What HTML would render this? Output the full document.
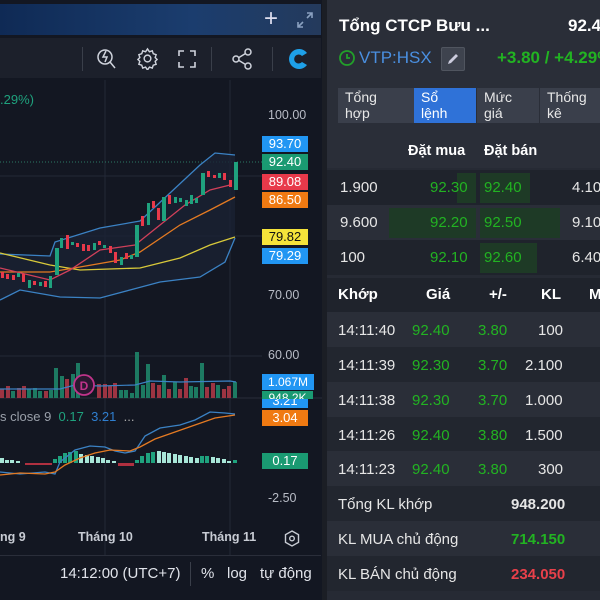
<!DOCTYPE html>
<html><head><meta charset="utf-8">
<style>
*{margin:0;padding:0;box-sizing:border-box}
body{width:600px;height:600px;overflow:hidden;background:#1b1e25;font-family:"Liberation Sans","Noto Sans CJK SC",sans-serif;position:relative;color:#e6e6e6}
.abs{position:absolute;white-space:nowrap}
.lbl{position:absolute;left:262px;width:46px;height:16px;color:#fff;font-size:13px;text-align:center;line-height:16px}
.ax{position:absolute;left:268px;color:#b8bcc6;font-size:12.5px}
#rp{position:absolute;left:327px;top:0;width:273px;height:600px;background:#262a34}
.row{position:absolute;left:0;width:273px;height:35px;font-size:15px}
.row span{position:absolute;top:9px}
.g{color:#22b322}
.tab{position:absolute;top:88px;height:35px;background:#3a3f4b;color:#e8e8e8;font-size:14px;line-height:16px;padding:1px 0 0 7px}
</style></head><body>
<div class="abs" style="left:0;top:0;width:322px;height:600px;background:#131722"></div>
<div class="abs" style="left:0;top:4px;width:321px;height:31px;background:linear-gradient(90deg,#0f2a55,#1b3d6e 60%,#243a5c)"></div>
<div class="abs" style="left:264px;top:5px;color:#dde;font-size:24px;font-weight:300">+</div>
<svg class="abs" style="left:296px;top:11px" width="18" height="18" viewBox="0 0 18 18" fill="none" stroke="#8aa0c0" stroke-width="1.6"><path d="M11 2h5v5M16 2l-5 5M2 11v5h5M2 16l5-5"/></svg>
<div class="abs" style="left:0;top:38px;width:321px;height:40px;background:#1c202b"></div>
<div class="abs" style="left:82px;top:47px;width:1px;height:24px;background:#3a3f4a"></div>
<svg class="abs" style="left:96px;top:46px" width="22" height="24" viewBox="0 0 22 24" fill="none" stroke="#cfd3dc" stroke-width="1.5"><circle cx="9" cy="11" r="7"/><path d="M14 16l5 6M10 5l-3 6h4l-2 5"/></svg>
<svg class="abs" style="left:136px;top:47px" width="23" height="23" viewBox="0 0 24 24" fill="none" stroke="#cfd3dc" stroke-width="1.5"><circle cx="12" cy="12" r="3.5"/><path d="M12 2l2 3 3-1 1 3 3 1-1 3 2 2-2 2 1 3-3 1-1 3-3-1-2 3-2-3-3 1-1-3-3-1 1-3-2-2 2-2-1-3 3-1 1-3 3 1z"/></svg>
<svg class="abs" style="left:177px;top:49px" width="20" height="20" viewBox="0 0 20 20" fill="none" stroke="#cfd3dc" stroke-width="1.6"><path d="M2 7V2h5M13 2h5v5M18 13v5h-5M7 18H2v-5"/></svg>
<div class="abs" style="left:211px;top:47px;width:1px;height:24px;background:#3a3f4a"></div>
<svg class="abs" style="left:231px;top:48px" width="22" height="22" viewBox="0 0 22 22" fill="none" stroke="#cfd3dc" stroke-width="1.5"><circle cx="17" cy="4" r="3"/><circle cx="5" cy="11" r="3"/><circle cx="17" cy="18" r="3"/><path d="M8 9.5l6.5-4M8 12.5l6.5 4"/></svg>
<div class="abs" style="left:272px;top:47px;width:1px;height:24px;background:#3a3f4a"></div>
<svg class="abs" style="left:287px;top:47px" width="24" height="24" viewBox="0 0 24 24"><path d="M20 6A10 10 0 1 0 20 18L15 15A4.5 4.5 0 1 1 15 9Z" fill="#1ea0e8"/></svg>

<svg class="abs" style="left:0;top:80px" width="322" height="475" viewBox="0 80 322 475">
<g stroke="#232837" stroke-width="1"><line x1="105" y1="80" x2="105" y2="555"/><line x1="230" y1="80" x2="230" y2="555"/><line x1="0" y1="176" x2="262" y2="176"/><line x1="0" y1="236" x2="262" y2="236"/><line x1="0" y1="356" x2="262" y2="356"/><line x1="0" y1="398" x2="322" y2="398" stroke="#2a2e3a"/></g>
<line x1="0" y1="162" x2="262" y2="162" stroke="#2b7a64" stroke-dasharray="1,2"/>
<path d="M0,254 L50,256 L55,242 L100,228 L140,221 L170,193 L200,165 L215,153 L235,155 L235,238 L225,262 L200,277 L160,282 L130,290 L100,298 L60,297 L20,290 L0,300Z" fill="#1a2233" opacity="0.8"/>
<g fill="none" stroke-width="1.3">
<path d="M0,254 L50,256 L55,242 L100,228 L140,221 L170,193 L200,165 L215,153 L235,155" stroke="#3b82c4"/>
<path d="M0,300 L20,290 L60,297 L100,298 L130,290 L160,282 L200,277 L225,262 L235,238" stroke="#3b82c4"/>
<path d="M0,253 L50,265 L80,270 L140,268 L180,258 L210,245 L235,237" stroke="#d8c93a"/>
<path d="M0,272 L50,272 L80,267 L120,260 L140,252 L180,225 L210,210 L235,197" stroke="#e47a22"/>
<path d="M0,268 L50,280 L70,270 L100,250 L135,245 L160,225 L185,205 L210,190 L230,185" stroke="#d0405a"/>
</g>
<g>
<rect x="1" y="272" width="3" height="6" fill="#e8394a"/><rect x="6" y="274" width="3" height="5" fill="#e8394a"/><rect x="12" y="275" width="3" height="5" fill="#e8394a"/><rect x="17" y="273" width="3" height="4" fill="#1fa27e"/><rect x="22" y="274" width="3" height="8" fill="#e8394a"/><rect x="28" y="280" width="3" height="8" fill="#1fa27e"/><rect x="33" y="281" width="3" height="4" fill="#e8394a"/><rect x="39" y="282" width="3" height="4" fill="#1fa27e"/><rect x="44" y="281" width="3" height="6" fill="#e8394a"/><rect x="49" y="276" width="3" height="12" fill="#1fa27e"/>
<rect x="55" y="248" width="4" height="27" fill="#1fa27e"/><rect x="60" y="238" width="3" height="10" fill="#1fa27e"/><rect x="66" y="235" width="3" height="14" fill="#e8394a"/><rect x="71" y="242" width="3" height="3" fill="#1fa27e"/><rect x="76" y="243" width="3" height="4" fill="#e8394a"/><rect x="82" y="244" width="3" height="7" fill="#e8394a"/><rect x="87" y="245" width="3" height="6" fill="#e8394a"/><rect x="93" y="243" width="3" height="7" fill="#1fa27e"/><rect x="98" y="241" width="3" height="4" fill="#e8394a"/><rect x="103" y="245" width="3" height="3" fill="#1fa27e"/>
<rect x="109" y="246" width="3" height="7" fill="#e8394a"/><rect x="114" y="252" width="3" height="11" fill="#e8394a"/><rect x="120" y="257" width="3" height="8" fill="#1fa27e"/><rect x="125" y="253" width="3" height="6" fill="#e8394a"/><rect x="130" y="255" width="3" height="4" fill="#1fa27e"/>
<rect x="135" y="225" width="4" height="32" fill="#1fa27e"/><rect x="141" y="216" width="3" height="10" fill="#e8394a"/><rect x="147" y="203" width="3" height="22" fill="#1fa27e"/><rect x="152" y="201" width="3" height="7" fill="#e8394a"/><rect x="157" y="208" width="3" height="12" fill="#e8394a"/><rect x="162" y="197" width="4" height="24" fill="#1fa27e"/><rect x="168" y="195" width="3" height="9" fill="#e8394a"/><rect x="174" y="197" width="3" height="6" fill="#1fa27e"/><rect x="179" y="198" width="3" height="4" fill="#1fa27e"/><rect x="185" y="200" width="3" height="6" fill="#1fa27e"/><rect x="190" y="195" width="3" height="9" fill="#1fa27e"/><rect x="195" y="198" width="3" height="5" fill="#1fa27e"/>
<rect x="201" y="173" width="4" height="22" fill="#1fa27e"/><rect x="207" y="171" width="3" height="6" fill="#e8394a"/><rect x="213" y="175" width="3" height="3" fill="#e8394a"/><rect x="218" y="173" width="3" height="5" fill="#1fa27e"/><rect x="223" y="173" width="3" height="7" fill="#e8394a"/><rect x="229" y="180" width="3" height="7" fill="#e8394a"/><rect x="234" y="162" width="4" height="28" fill="#1fa27e"/>
</g>
<g>
<rect x="0" y="389" width="4" height="9" fill="#9c3442"/><rect x="6" y="386" width="4" height="12" fill="#9c3442"/><rect x="11" y="391" width="4" height="7" fill="#1d7a62"/><rect x="17" y="388" width="4" height="10" fill="#9c3442"/><rect x="22" y="386" width="4" height="12" fill="#9c3442"/><rect x="27" y="389" width="4" height="9" fill="#1d7a62"/><rect x="33" y="388" width="4" height="10" fill="#1d7a62"/><rect x="38" y="391" width="4" height="7" fill="#1d7a62"/><rect x="44" y="391" width="4" height="7" fill="#9c3442"/><rect x="49" y="390" width="4" height="8" fill="#1d7a62"/><rect x="54" y="368" width="4" height="30" fill="#1d7a62"/><rect x="60" y="376" width="4" height="22" fill="#1d7a62"/><rect x="65" y="379" width="4" height="19" fill="#9c3442"/><rect x="71" y="374" width="4" height="24" fill="#1d7a62"/><rect x="76" y="363" width="4" height="35" fill="#1d7a62"/><rect x="97" y="384" width="4" height="14" fill="#9c3442"/><rect x="103" y="384" width="4" height="14" fill="#9c3442"/><rect x="108" y="386" width="4" height="12" fill="#9c3442"/><rect x="113" y="383" width="4" height="15" fill="#9c3442"/><rect x="119" y="390" width="4" height="8" fill="#1d7a62"/><rect x="124" y="390" width="4" height="8" fill="#1d7a62"/><rect x="130" y="393" width="4" height="5" fill="#1d7a62"/><rect x="135" y="352" width="4" height="46" fill="#1d7a62"/><rect x="141" y="385" width="4" height="13" fill="#1d7a62"/><rect x="146" y="364" width="4" height="34" fill="#1d7a62"/><rect x="151" y="383" width="4" height="15" fill="#9c3442"/><rect x="157" y="385" width="4" height="13" fill="#9c3442"/><rect x="162" y="375" width="4" height="23" fill="#1d7a62"/><rect x="167" y="389" width="4" height="9" fill="#9c3442"/><rect x="173" y="382" width="4" height="16" fill="#1d7a62"/><rect x="178" y="389" width="4" height="9" fill="#9c3442"/><rect x="184" y="378" width="4" height="20" fill="#9c3442"/><rect x="189" y="386" width="4" height="12" fill="#1d7a62"/><rect x="194" y="387" width="4" height="11" fill="#1d7a62"/><rect x="200" y="363" width="4" height="35" fill="#1d7a62"/><rect x="205" y="387" width="4" height="11" fill="#9c3442"/><rect x="211" y="383" width="4" height="15" fill="#9c3442"/><rect x="216" y="385" width="4" height="13" fill="#1d7a62"/><rect x="222" y="389" width="4" height="9" fill="#9c3442"/><rect x="227" y="386" width="4" height="12" fill="#9c3442"/><rect x="233" y="382" width="4" height="16" fill="#1d7a62"/>
</g>
<path d="M0,389 L60,389 L75,385 L100,386 L135,385 L150,381 L180,382 L230,381 L236,382" fill="none" stroke="#3b82c4" stroke-width="1.2"/>
<circle cx="84" cy="385" r="10" fill="#2a1830" stroke="#c0348a" stroke-width="1.8"/>
<text x="84" y="390" fill="#c0348a" font-size="12" font-weight="bold" text-anchor="middle" font-family="Liberation Sans">D</text>
<g fill="#a8e6d8">
<rect x="0" y="458" width="4" height="5"/><rect x="5" y="460" width="4" height="3"/><rect x="10" y="460" width="4" height="3"/><rect x="16" y="461" width="4" height="2"/>
<rect x="58" y="456" width="4" height="7" fill="#1fa27e"/><rect x="53" y="459" width="4" height="4" fill="#1fa27e"/><rect x="63" y="453" width="4" height="10" fill="#1fa27e"/><rect x="68" y="452" width="4" height="11" fill="#1fa27e"/><rect x="74" y="451" width="4" height="12" fill="#1fa27e"/><rect x="79" y="454" width="4" height="9"/><rect x="85" y="455" width="4" height="8"/><rect x="90" y="456" width="4" height="7"/><rect x="96" y="457" width="4" height="6"/><rect x="101" y="458" width="4" height="5"/><rect x="106" y="460" width="4" height="3"/><rect x="112" y="461" width="4" height="2"/>
<rect x="135" y="460" width="4" height="3" fill="#1fa27e"/><rect x="140" y="456" width="4" height="7" fill="#1fa27e"/><rect x="146" y="453" width="4" height="10" fill="#1fa27e"/><rect x="151" y="452" width="4" height="11" fill="#1fa27e"/><rect x="157" y="451" width="4" height="12"/><rect x="162" y="452" width="4" height="11"/><rect x="167" y="453" width="4" height="10"/><rect x="173" y="454" width="4" height="9"/><rect x="178" y="455" width="4" height="8"/><rect x="184" y="456" width="4" height="7"/><rect x="189" y="457" width="4" height="6"/><rect x="195" y="458" width="4" height="5"/><rect x="200" y="456" width="4" height="7" fill="#1fa27e"/><rect x="205" y="456" width="4" height="7" fill="#1fa27e"/><rect x="211" y="457" width="4" height="6"/><rect x="216" y="458" width="4" height="5"/><rect x="222" y="459" width="4" height="4"/><rect x="227" y="461" width="4" height="2"/><rect x="233" y="460" width="4" height="3" fill="#1fa27e"/>
</g>
<g fill="#b03040"><rect x="25" y="463" width="27" height="2"/><rect x="118" y="463" width="16" height="3"/></g>
<path d="M0,472 L20,474 L45,472 L55,474 L60,462 L75,450 L90,446 L105,447 L115,451 L125,453 L135,451 L145,436 L160,428 L180,425 L195,420 L210,412 L225,413 L235,414" fill="none" stroke="#3b82c4" stroke-width="1.3"/>
<path d="M0,475 L20,473 L45,474 L55,472 L65,465 L80,458 L95,453 L110,450 L130,451 L140,447 L155,439 L175,432 L195,425 L215,418 L235,415" fill="none" stroke="#e47a22" stroke-width="1.3"/>
</svg>

<div class="abs" style="left:0;top:92px;color:#1fa27e;font-size:13px">.29%)</div>
<div class="ax" style="top:108px">100.00</div>
<div class="lbl" style="top:136px;background:#2196f3">93.70</div>
<div class="lbl" style="top:154px;background:#1a9a72">92.40</div>
<div class="lbl" style="top:174px;background:#e8394a">89.08</div>
<div class="lbl" style="top:192px;background:#f07a12">86.50</div>
<div class="lbl" style="top:229px;background:#f5e33a;color:#111">79.82</div>
<div class="lbl" style="top:248px;background:#2196f3">79.29</div>
<div class="ax" style="top:288px">70.00</div>
<div class="ax" style="top:348px">60.00</div>
<div class="lbl" style="top:391px;background:#1a9a72;width:51px;height:8px;overflow:hidden;line-height:14px;font-size:12px">948.2K</div>
<div class="lbl" style="top:374px;background:#2196f3;width:52px;font-size:12px">1.067M</div>
<div class="lbl" style="top:399px;background:#2196f3;height:9px;overflow:hidden;line-height:4px">3.21</div>
<div class="lbl" style="top:410px;background:#f07a12">3.04</div>
<div class="lbl" style="top:453px;background:#1a9a72">0.17</div>
<div class="ax" style="top:491px">-2.50</div>
<div class="abs" style="left:0;top:409px;font-size:13px;color:#9aa0aa">s close 9 <span style="color:#1fa27e">&nbsp;0.17</span> <span style="color:#2f7fd0">&nbsp;3.21</span> <span style="color:#aaa">&nbsp;...</span></div>
<div class="abs" style="left:0;top:530px;font-size:12.5px;color:#c8ccd4;font-weight:bold">ng 9</div>
<div class="abs" style="left:78px;top:530px;font-size:12.5px;color:#c8ccd4;font-weight:bold">Tháng 10</div>
<div class="abs" style="left:202px;top:530px;font-size:12.5px;color:#c8ccd4;font-weight:bold">Tháng 11</div>
<svg class="abs" style="left:284px;top:530px" width="16" height="17" viewBox="0 0 16 17" fill="none" stroke="#c8ccd4" stroke-width="1.4"><path d="M8 1l6.5 3.7v7.6L8 16 1.5 12.3V4.7z"/><circle cx="8" cy="8.5" r="2.3"/></svg>
<div class="abs" style="left:0;top:555px;width:321px;height:1px;background:#2a2e3a"></div>
<div class="abs" style="left:60px;top:565px;font-size:15px;color:#e0e3ea">14:12:00 (UTC+7)</div>
<div class="abs" style="left:190px;top:562px;width:1px;height:24px;background:#3a3f4a"></div>
<div class="abs" style="left:201px;top:565px;font-size:15px;color:#e0e3ea">%</div>
<div class="abs" style="left:227px;top:565px;font-size:15px;color:#e0e3ea">log</div>
<div class="abs" style="left:260px;top:565px;font-size:15px;color:#e0e3ea">tự động</div>

<div id="rp">
<div class="abs" style="left:0;top:0;width:273px;height:168px;background:#2a2e38"></div>
<div class="abs" style="left:12px;top:16px;font-size:17px;font-weight:bold;color:#fff">Tổng CTCP Bưu ...</div>
<div class="abs" style="left:241px;top:16px;font-size:17px;font-weight:bold;color:#fff">92.4</div>
<svg class="abs" style="left:11px;top:49px" width="18" height="18" viewBox="0 0 18 18" fill="none" stroke="#22a02a" stroke-width="1.8"><circle cx="9" cy="9" r="7"/><path d="M9 5v4h3"/></svg>
<div class="abs" style="left:32px;top:48px;font-size:17px;color:#4a8fe0">VTP:HSX</div>
<div class="abs" style="left:114px;top:47px;width:24px;height:24px;background:#3e434e;border:1px solid #50555f;border-radius:2px"></div>
<svg class="abs" style="left:119px;top:52px" width="14" height="14" viewBox="0 0 14 14"><path d="M2 12l1-3 7-7 2 2-7 7z" fill="#ccd"/></svg>
<div class="abs" style="left:170px;top:48px;font-size:17px;font-weight:bold;color:#22b322">+3.80 / +4.29%</div>
<div class="tab" style="left:11px;width:76px">Tổng<br>hợp</div>
<div class="tab" style="left:87px;width:62px;background:#2f72d8;color:#fff">Sổ<br>lệnh</div>
<div class="tab" style="left:149px;width:63px;border-left:1px solid #2a2e38">Mức<br>giá</div>
<div class="tab" style="left:212px;width:61px;border-left:1px solid #2a2e38">Thống<br>kê</div>
<div class="abs" style="left:81px;top:143px;font-size:14.5px;font-weight:bold;color:#fff">Đặt mua</div>
<div class="abs" style="left:157px;top:143px;font-size:14.5px;font-weight:bold;color:#fff">Đặt bán</div>

<div class="row" style="top:170px;background:#1f232c"><div class="abs" style="left:130px;top:3px;width:19px;height:30px;background:#1e3a26"></div><div class="abs" style="left:153px;top:3px;width:50px;height:30px;background:#1e3a26"></div><span style="left:13px">1.900</span><span class="g" style="left:103px">92.30</span><span class="g" style="left:157px">92.40</span><span style="left:245px">4.10</span></div>
<div class="row" style="top:205px;background:#2a2e38"><div class="abs" style="left:62px;top:3px;width:87px;height:30px;background:#1e3a26"></div><div class="abs" style="left:153px;top:3px;width:80px;height:30px;background:#1e3a26"></div><span style="left:13px">9.600</span><span class="g" style="left:103px">92.20</span><span class="g" style="left:157px">92.50</span><span style="left:245px">9.10</span></div>
<div class="row" style="top:240px;background:#1f232c"><div class="abs" style="left:153px;top:3px;width:57px;height:30px;background:#1e3a26"></div><span style="left:13px">100</span><span class="g" style="left:103px">92.10</span><span class="g" style="left:157px">92.60</span><span style="left:245px">6.40</span></div>

<div class="row" style="top:278px;height:34px;background:#1f232c;font-weight:bold;color:#fff"><span style="left:11px;top:8px">Khớp</span><span style="left:99px;top:8px">Giá</span><span style="left:162px;top:8px">+/-</span><span style="left:214px;top:8px">KL</span><span style="left:262px;top:8px">M</span></div>
<div class="row" style="top:312px;background:#2a2e38"><span style="left:11px;top:10px">14:11:40</span><span class="g" style="left:85px;top:10px">92.40</span><span class="g" style="left:151px;top:10px">3.80</span><span style="left:211px;top:10px">100</span></div>
<div class="row" style="top:347px;background:#22262f"><span style="left:11px;top:10px">14:11:39</span><span class="g" style="left:85px;top:10px">92.30</span><span class="g" style="left:151px;top:10px">3.70</span><span style="left:198px;top:10px">2.100</span></div>
<div class="row" style="top:382px;background:#2a2e38"><span style="left:11px;top:10px">14:11:38</span><span class="g" style="left:85px;top:10px">92.30</span><span class="g" style="left:151px;top:10px">3.70</span><span style="left:198px;top:10px">1.000</span></div>
<div class="row" style="top:417px;background:#22262f"><span style="left:11px;top:10px">14:11:26</span><span class="g" style="left:85px;top:10px">92.40</span><span class="g" style="left:151px;top:10px">3.80</span><span style="left:198px;top:10px">1.500</span></div>
<div class="row" style="top:451px;background:#2a2e38"><span style="left:11px;top:10px">14:11:23</span><span class="g" style="left:85px;top:10px">92.40</span><span class="g" style="left:151px;top:10px">3.80</span><span style="left:211px;top:10px">300</span></div>
<div class="row" style="top:486px;background:#22262f"><span style="left:11px;top:10px">Tổng KL khớp</span><span style="left:184px;top:10px;font-weight:bold">948.200</span></div>
<div class="row" style="top:521px;background:#2a2e38"><span style="left:11px;top:10px">KL MUA chủ động</span><span class="g" style="left:184px;top:10px;font-weight:bold">714.150</span></div>
<div class="row" style="top:556px;background:#22262f"><span style="left:11px;top:10px">KL BÁN chủ động</span><span style="left:184px;top:10px;font-weight:bold;color:#e8404a">234.050</span></div>
</div>
</body></html>
